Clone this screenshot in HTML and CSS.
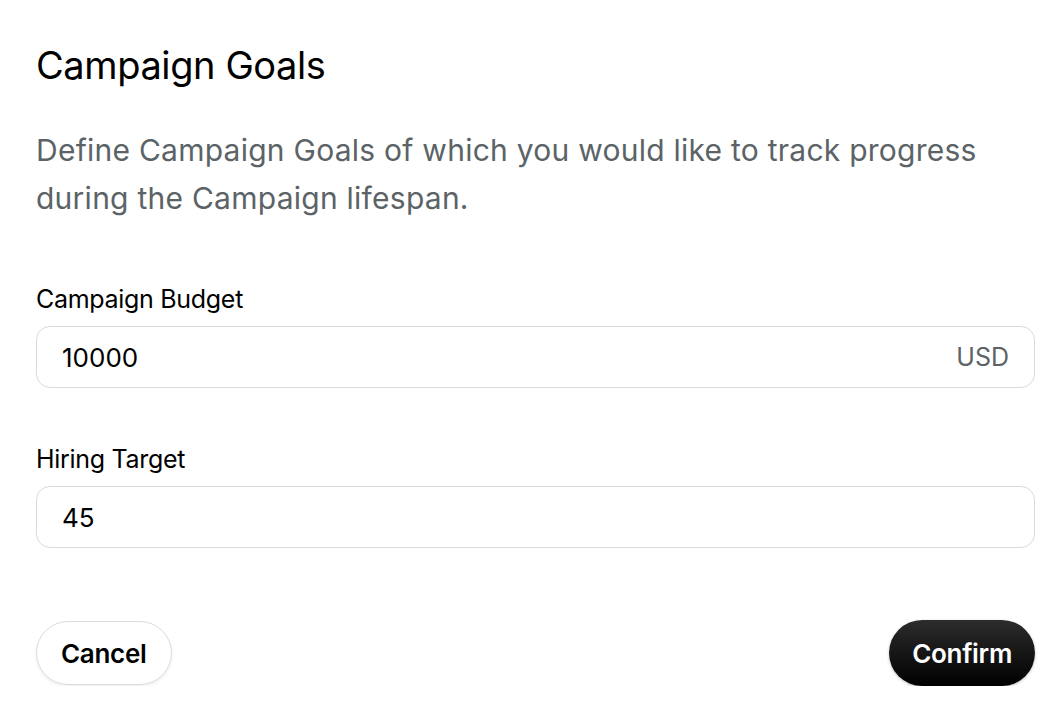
FILE: index.html
```html
<!DOCTYPE html>
<html lang="en">
<head>
  <meta charset="UTF-8" />
  <title>Campaign Goals</title>
  <link rel="stylesheet" href="styles.css">
</head>
<body>
  <div class="dialog">
    <h2>Campaign Goals</h2>
    <p class="desc">Define Campaign Goals of which you would like to track progress during the Campaign lifespan.</p>

    <div class="field">
      <label>Campaign Budget</label>
      <div class="input-box">
        <span class="value">10000</span>
        <span class="suffix">USD</span>
      </div>
    </div>

    <div class="field">
      <label>Hiring Target</label>
      <div class="input-box">
        <span class="value">45</span>
      </div>
    </div>

    <div class="actions">
      <button class="btn cancel">Cancel</button>
      <button class="btn confirm">Confirm</button>
    </div>
  </div>
</body>
</html>
```

FILE: styles.css
```css
body {
  margin: 0;
  background: #fff;
  font-family: Inter, 'Noto Sans', sans-serif;
  color: #000;
}

.dialog {
  padding: 40px 17px 0 36px;
}

h2 {
  margin: 0;
  font-size: 38px;
  font-weight: 400;
  line-height: 50px;
  letter-spacing: -0.4px;
}

.desc {
  margin: 36px 0 0;
  width: 980px;
  font-size: 30px;
  line-height: 48px;
  letter-spacing: 0.25px;
  color: #5b6366;
}

.field {
  margin-top: 62px;
}

.field + .field {
  margin-top: 56px;
}

.field label {
  display: block;
  font-size: 25px;
  line-height: 30px;
  letter-spacing: -0.3px;
  margin-bottom: 12px;
}

.input-box {
  display: flex;
  align-items: center;
  justify-content: space-between;
  height: 60px;
  padding: 0 25px;
  border: 1px solid #dadada;
  border-radius: 14px;
  font-size: 26px;
}

.suffix {
  font-size: 25px;
  color: #5b6366;
}

.actions {
  display: flex;
  justify-content: space-between;
  align-items: center;
  margin-top: 72px;
}

.btn {
  font-family: Inter, 'Noto Sans', sans-serif;
  font-size: 26px;
  font-weight: 600;
  border-radius: 34px;
  cursor: pointer;
  letter-spacing: -0.3px;
}

.cancel {
  height: 64px;
  padding: 0 24px;
  background: #fff;
  color: #000;
  border: 1px solid #dcdcdc;
  box-shadow: 0 2px 3px rgba(0, 0, 0, 0.06);
}

.confirm {
  height: 66px;
  padding: 0 23px;
  color: #fff;
  border: none;
  background: linear-gradient(#2c2c2c, #000);
  box-shadow: 0 1px 3px rgba(0, 0, 0, 0.25);
}
```
